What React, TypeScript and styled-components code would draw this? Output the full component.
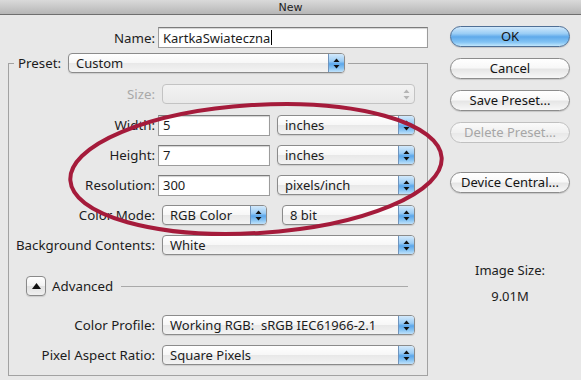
import React from 'react';
import styled, { createGlobalStyle } from 'styled-components';

const Global = createGlobalStyle`
  html, body { margin: 0; padding: 0; background: #e8e8e8; }
  body {
    font-family: "Noto Sans", "DejaVu Sans", sans-serif;
    font-size: 13px;
    color: #1c1c1c;
  }
  * { box-sizing: border-box; }
`;

const Window = styled.div`
  position: relative;
  width: 581px;
  height: 380px;
  overflow: hidden;
  background: #e8e8e8;
  display: flex;
  flex-direction: column;
`;

const TitleBar = styled.div`
  flex: none;
  height: 15px;
  background: linear-gradient(#dadada, #b6b6b6);
  border-bottom: 1px solid #6f6f6f;
  display: flex;
  align-items: center;
  justify-content: center;
  font-family: "DejaVu Sans", sans-serif;
  font-size: 11px;
  line-height: 1;
  color: #222;
`;

const Body = styled.div`
  display: flex;
  gap: 22px;
  padding-left: 8px;
`;

const LeftColumn = styled.div`
  width: 420px;
  display: flex;
  flex-direction: column;
`;

const NameRow = styled.div`
  display: flex;
  align-items: center;
  gap: 3px;
  padding-top: 12px;
`;

const Label = styled.div<{ $w?: number; $disabled?: boolean }>`
  width: ${(p) => p.$w ?? 146}px;
  flex: none;
  text-align: right;
  white-space: nowrap;
  line-height: 20px;
  font-size: 13.3px;
  color: ${(p) => (p.$disabled ? '#a9a9a9' : '#1c1c1c')};
`;

const TextField = styled.div<{ $w: number }>`
  width: ${(p) => p.$w}px;
  height: 21px;
  flex: none;
  display: flex;
  align-items: center;
  padding-left: 4px;
  background: #fff;
  border: 1px solid #9c9c9c;
  border-top-color: #7c7c7c;
  box-shadow: inset 0 1px 1px rgba(0, 0, 0, 0.18);
  white-space: nowrap;
`;

const Caret = styled.span`
  display: inline-block;
  width: 1px;
  height: 15px;
  background: #000;
  margin-left: 1px;
`;

const Group = styled.fieldset`
  margin: 5px 0 0 0;
  padding: 11px 0 10px 0;
  width: 420px;
  height: 323px;
  border: 1px solid #a2a2a2;
  display: flex;
  flex-direction: column;
  min-width: 0;
`;

const Legend = styled.legend`
  display: flex;
  align-items: center;
  gap: 3px;
  margin-left: 5px;
  padding: 0 3px 0 4px;
  line-height: 20px;
  font-size: 13.3px;
`;

const Rows = styled.div`
  display: flex;
  flex-direction: column;
  gap: 10px;
`;

const Row = styled.div<{ $mt?: number }>`
  display: flex;
  align-items: center;
  gap: 3px;
  height: 20px;
  margin-top: ${(p) => p.$mt ?? 0}px;
`;

const PopUp = styled.div<{ $w: number; $ml?: number; $disabled?: boolean }>`
  width: ${(p) => p.$w}px;
  height: 20px;
  flex: none;
  margin-left: ${(p) => p.$ml ?? 4}px;
  display: flex;
  align-items: stretch;
  border: 1px solid ${(p) => (p.$disabled ? '#c3c3c3' : '#8b8b8b')};
  border-radius: 4px;
  background: ${(p) =>
    p.$disabled
      ? 'linear-gradient(#f2f2f2, #e9e9e9)'
      : 'linear-gradient(#ffffff 0%, #f7f7f7 48%, #e8e8e8 52%, #f3f3f3 100%)'};
  box-shadow: ${(p) => (p.$disabled ? 'none' : '0 1px 1px rgba(0,0,0,0.12)')};
  overflow: hidden;
  font-size: 13px;
`;

const PopText = styled.div`
  flex: 1;
  padding-left: 7px;
  line-height: 18px;
  white-space: nowrap;
  overflow: hidden;
`;

const ArrowCap = styled.div<{ $disabled?: boolean }>`
  width: 16px;
  flex: none;
  display: flex;
  align-items: center;
  justify-content: center;
  border-left: 1px solid ${(p) => (p.$disabled ? 'transparent' : '#6f94bd')};
  background: ${(p) =>
    p.$disabled
      ? 'transparent'
      : 'linear-gradient(#d3e9fb 0%, #9ccdf5 40%, #5ba6ea 55%, #8cc6f3 80%, #c0e2fb 100%)'};
`;

const AdvancedRow = styled.div`
  display: flex;
  align-items: center;
  height: 20px;
  margin-top: 11px;
  padding-left: 17px;
  padding-right: 19px;
  gap: 6px;
`;

const Disclosure = styled.div`
  width: 20px;
  height: 20px;
  flex: none;
  display: flex;
  align-items: center;
  justify-content: center;
  border: 1px solid #8a8a8a;
  border-radius: 4px;
  background: linear-gradient(#ffffff, #f2f2f2 50%, #e2e2e2 52%, #f0f0f0);
  box-shadow: 0 1px 1px rgba(0, 0, 0, 0.12);
`;

const AdvancedText = styled.span`
  line-height: 20px;
  font-size: 13.3px;
`;

const Rule = styled.div`
  flex: 1;
  height: 1px;
  background: #a9a9a9;
  margin-left: 2px;
`;

const RightColumn = styled.div`
  width: 120px;
  display: flex;
  flex-direction: column;
  align-items: center;
  gap: 11px;
  padding-top: 11px;
`;

const Button = styled.div<{ $primary?: boolean; $disabled?: boolean; $mt?: number }>`
  width: 120px;
  height: 21px;
  margin-top: ${(p) => p.$mt ?? 0}px;
  display: flex;
  align-items: center;
  justify-content: center;
  border-radius: 11px;
  border: 1px solid
    ${(p) => (p.$primary ? '#4f6f95' : p.$disabled ? '#c0c0c0' : '#8c8c8c')};
  background: ${(p) =>
    p.$primary
      ? 'linear-gradient(#d0e8fb 0%, #9acdf5 35%, #5fa9ea 52%, #84c4f4 80%, #c2e7fc 100%)'
      : p.$disabled
      ? 'linear-gradient(#fafafa, #f0f0f0 50%, #e8e8e8 52%, #f3f3f3)'
      : 'linear-gradient(#ffffff 0%, #f8f8f8 45%, #e6e6e6 55%, #f7f7f7 100%)'};
  box-shadow: ${(p) => (p.$disabled ? 'none' : '0 1px 1px rgba(0,0,0,0.15)')};
  color: ${(p) => (p.$disabled ? '#a6a6a6' : '#141414')};
  line-height: 19px;
  white-space: nowrap;
`;

const Info = styled.div<{ $mt: number }>`
  margin-top: ${(p) => p.$mt}px;
  line-height: 16px;
  text-align: center;
  width: 100%;
`;

const Annotation = styled.svg`
  position: absolute;
  left: 0;
  top: 0;
  pointer-events: none;
`;

const Arrows: React.FC<{ color?: string }> = ({ color = '#111' }) => (
  <svg width="7" height="11" viewBox="0 0 7 11">
    <path d="M3.5 0.5 L6.5 4 L0.5 4 Z" fill={color} />
    <path d="M3.5 10.5 L6.5 7 L0.5 7 Z" fill={color} />
  </svg>
);

const Select: React.FC<{ w: number; ml?: number; disabled?: boolean; children?: React.ReactNode }> = ({
  w,
  ml,
  disabled,
  children,
}) => (
  <PopUp $w={w} $ml={ml} $disabled={disabled}>
    <PopText>{children}</PopText>
    <ArrowCap $disabled={disabled}>
      <Arrows color={disabled ? '#b4b4b4' : '#111'} />
    </ArrowCap>
  </PopUp>
);

export default function App() {
  return (
    <Window>
      <Global />
      <TitleBar>New</TitleBar>
      <Body>
        <LeftColumn>
          <NameRow>
            <Label $w={147}>Name:</Label>
            <TextField $w={270}>
              KartkaSwiateczna
              <Caret />
            </TextField>
          </NameRow>
          <Group>
            <Legend>
              Preset:
              <Select w={277}>Custom</Select>
            </Legend>
            <Rows>
              <Row>
                <Label $disabled>Size:</Label>
                <Select w={253} disabled />
              </Row>
              <Row $mt={1}>
                <Label>Width:</Label>
                <TextField $w={112}>5</TextField>
                <Select w={138}>inches</Select>
              </Row>
              <Row>
                <Label>Height:</Label>
                <TextField $w={112}>7</TextField>
                <Select w={138}>inches</Select>
              </Row>
              <Row>
                <Label>Resolution:</Label>
                <TextField $w={112}>300</TextField>
                <Select w={138}>pixels/inch</Select>
              </Row>
              <Row>
                <Label>Color Mode:</Label>
                <Select w={105}>RGB Color</Select>
                <Select w={133} ml={12}>
                  8 bit
                </Select>
              </Row>
              <Row>
                <Label>Background Contents:</Label>
                <Select w={253}>White</Select>
              </Row>
              <AdvancedRow>
                <Disclosure>
                  <svg width="9" height="6" viewBox="0 0 9 6">
                    <path d="M4.5 0 L9 6 L0 6 Z" fill="#111" />
                  </svg>
                </Disclosure>
                <AdvancedText>Advanced</AdvancedText>
                <Rule />
              </AdvancedRow>
              <Row $mt={9}>
                <Label>Color Profile:</Label>
                <Select w={253}>Working RGB:&nbsp; sRGB IEC61966-2.1</Select>
              </Row>
              <Row>
                <Label>Pixel Aspect Ratio:</Label>
                <Select w={253}>Square Pixels</Select>
              </Row>
            </Rows>
          </Group>
        </LeftColumn>
        <RightColumn>
          <Button $primary>OK</Button>
          <Button>Cancel</Button>
          <Button>Save Preset...</Button>
          <Button $disabled>Delete Preset...</Button>
          <Button $mt={18}>Device Central...</Button>
          <Info $mt={58}>Image Size:</Info>
          <Info $mt={-1}>9.01M</Info>
        </RightColumn>
      </Body>
      <Annotation width="581" height="380" viewBox="0 0 581 380">
        <ellipse
          cx="256"
          cy="169"
          rx="186"
          ry="64"
          transform="rotate(-3.5 256 169)"
          fill="none"
          stroke="#a51b3b"
          strokeWidth="4"
        />
      </Annotation>
    </Window>
  );
}
